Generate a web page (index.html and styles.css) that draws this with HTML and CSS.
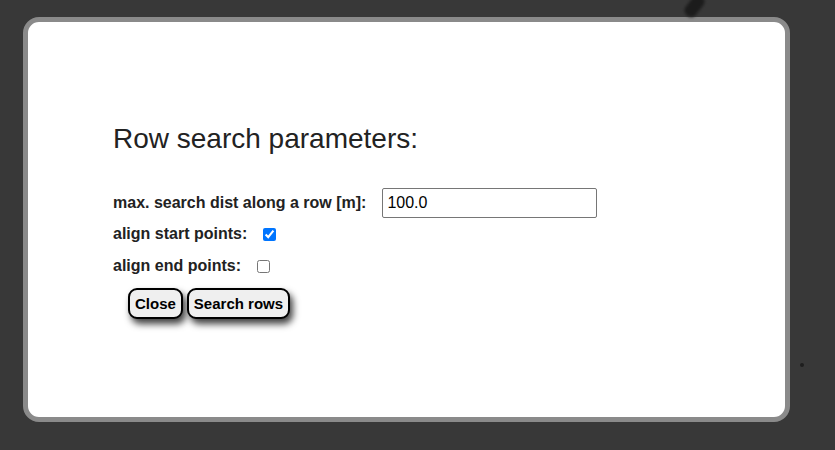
FILE: index.html
```html
<!DOCTYPE html>
<html>
<head>
<meta charset="utf-8">
<link rel="stylesheet" href="styles.css">
</head>
<body>
<div class="backdrop">
  <div class="blob"></div>
  <div class="dot"></div>
  <div class="modal">
    <h2 class="title">Row search parameters:</h2>
    <div class="form">
      <div class="row row-input">
        <label class="lbl">max. search dist along a row [m]:</label>
        <input class="text" type="text" value="100.0">
      </div>
      <div class="row row-check">
        <label class="lbl">align start points:</label>
        <input class="check" type="checkbox" checked>
      </div>
      <div class="row row-check">
        <label class="lbl">align end points:</label>
        <input class="check" type="checkbox">
      </div>
      <div class="buttons">
        <button class="btn">Close</button>
        <button class="btn">Search rows</button>
      </div>
    </div>
  </div>
</div>
</body>
</html>
```
FILE: styles.css
```css
html, body {
  margin: 0;
  padding: 0;
  width: 835px;
  height: 450px;
  overflow: hidden;
  background: #383838;
  font-family: "Liberation Sans", Arial, sans-serif;
}
.backdrop {
  position: relative;
  width: 835px;
  height: 450px;
  padding: 17px 0 0 23px;
  box-sizing: border-box;
}
.blob {
  position: absolute;
  left: 688px;
  top: -6px;
  width: 13px;
  height: 24px;
  background: #1c1c1c;
  border-radius: 6px;
  transform: rotate(38deg);
  filter: blur(1.5px);
}
.dot {
  position: absolute;
  left: 800px;
  top: 363px;
  width: 4px;
  height: 4px;
  border-radius: 50%;
  background: #1e1e1e;
  filter: blur(0.6px);
}
.modal {
  box-sizing: border-box;
  width: 767px;
  height: 405px;
  background: #fff;
  border: 5px solid #8a8a8a;
  border-radius: 16px;
  padding: 0 0 0 85px;
}
.title {
  margin: 0;
  padding-top: 101px;
  font-size: 28px;
  font-weight: normal;
  color: #222;
  line-height: 32px;
}
.form {
  margin-top: 33px;
}
.row {
  display: flex;
  align-items: center;
  color: #222;
}
.row-input {
  height: 30px;
}
.row-check {
  height: 32px;
}
.lbl {
  font-weight: bold;
  font-size: 16px;
  margin-right: 16px;
}
.text {
  width: 215px;
  height: 30px;
  box-sizing: border-box;
  border: 1px solid #767676;
  border-radius: 2px;
  padding: 0 4px;
  font-family: "Liberation Sans", Arial, sans-serif;
  font-size: 16px;
  color: #000;
  margin: 0;
}
.check {
  width: 13px;
  height: 13px;
  margin: 0;
}
.buttons {
  display: flex;
  gap: 4px;
  margin-top: 6px;
  padding-left: 15px;
}
.btn {
  height: 31px;
  box-sizing: border-box;
  border: 2px solid #000;
  border-radius: 9px;
  background: #efefef;
  font-family: "Liberation Sans", Arial, sans-serif;
  font-weight: bold;
  font-size: 15px;
  color: #000;
  padding: 0 5px;
  box-shadow: 3px 5px 7px rgba(0, 0, 0, 0.75);
}
```
